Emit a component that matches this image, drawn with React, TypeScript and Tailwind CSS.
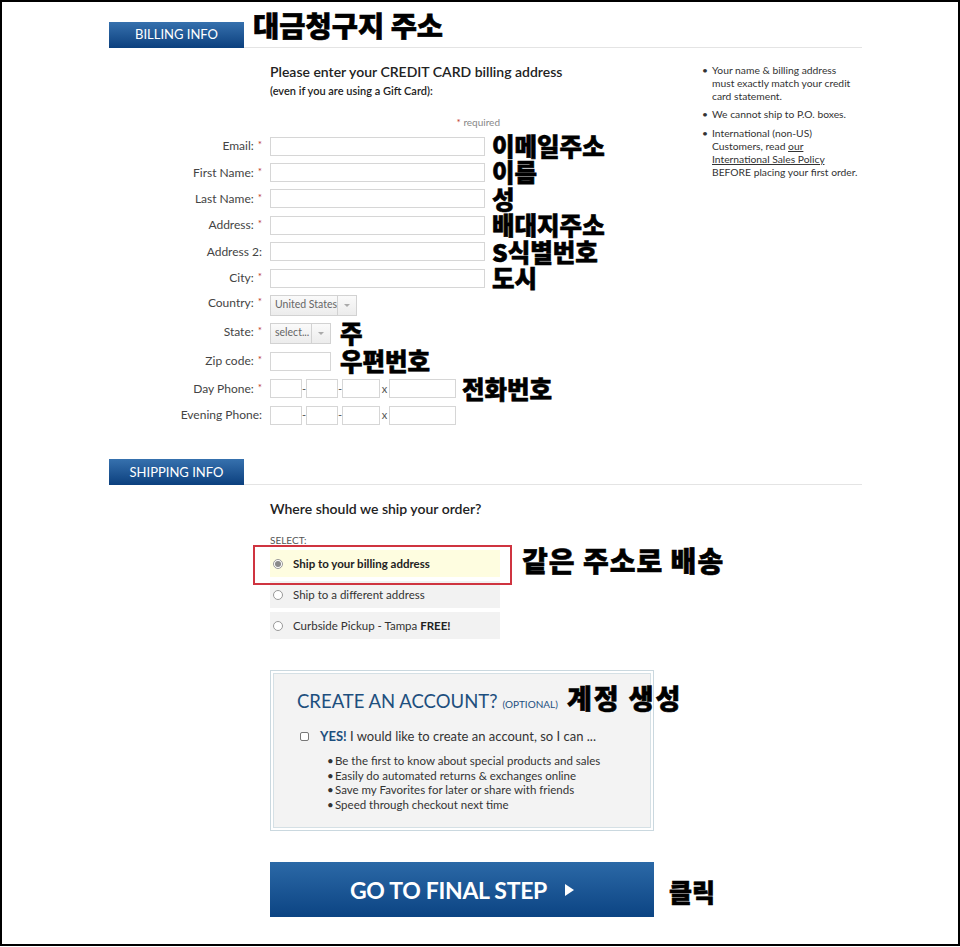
import React from "react";

const KR = "font-['Noto_Sans_CJK_KR',sans-serif] font-black text-black leading-none [-webkit-text-stroke:0.6px_#000]";

function Req() {
  return <span className="text-[#c0392b] text-[10px] ml-[4px] relative -top-[2px]">*</span>;
}

function Label({ text, req = true }: { text: string; req?: boolean }) {
  return (
    <div className="w-[154px] shrink-0 text-right text-[12px] text-[#444] pr-[1px]">
      {text}
      {req && <Req />}
    </div>
  );
}

function TextRow({ label, req = true, note }: { label: string; req?: boolean; note?: string }) {
  return (
    <div className="flex items-center h-[26.4px]">
      <Label text={label} req={req} />
      <div className="ml-[7px] w-[215px] h-[19px] border border-[#d6d6d6] bg-white shrink-0" />
      {note && <span className={`${KR} text-[24.5px] ml-[7px] whitespace-nowrap`}>{note}</span>}
    </div>
  );
}

function Select({ text, w, aw }: { text: string; w: string; aw: string }) {
  return (
    <div className={`${w} h-[21px] border border-[#d2d2d2] bg-gradient-to-b from-[#fafafa] to-[#ececec] flex shrink-0`}>
      <div className="flex-1 flex items-center pl-[4px] text-[10.5px] text-[#666] whitespace-nowrap overflow-hidden">{text}</div>
      <div className={`${aw} border-l border-[#d2d2d2] flex items-center justify-center`}>
        <div className="w-0 h-0 border-l-[3px] border-r-[3px] border-t-[3px] border-l-transparent border-r-transparent border-t-[#aaa]" />
      </div>
    </div>
  );
}

function Phone() {
  const box = "h-[19px] border border-[#d6d6d6] bg-white shrink-0";
  return (
    <div className="ml-[7px] flex items-center text-[11px] text-[#555]">
      <div className={`${box} w-[32px]`} />
      <span className="w-[4px] text-center">-</span>
      <div className={`${box} w-[32px]`} />
      <span className="w-[4px] text-center">-</span>
      <div className={`${box} w-[38px]`} />
      <span className="w-[9px] text-center">x</span>
      <div className={`${box} w-[67px]`} />
    </div>
  );
}

function SectionHeader({ title, note }: { title: string; note?: string }) {
  return (
    <div className="flex h-[26px]">
      <div className="w-[135px] h-[26px] bg-gradient-to-b from-[#3671ae] to-[#0b407e] text-white text-[13px] flex items-center justify-center">
        {title}
      </div>
      <div className="flex-1 border-b border-[#e4e4e4] relative">
        {note && (
          <span className={`${KR} absolute left-[9px] -top-[11px] text-[28.5px] whitespace-nowrap`}>{note}</span>
        )}
      </div>
    </div>
  );
}

function Bullet({ children }: { children: React.ReactNode }) {
  return (
    <div className="flex">
      <span className="w-[12px] shrink-0 pl-[2px]">•</span>
      <span>{children}</span>
    </div>
  );
}

function Radio({ checked }: { checked?: boolean }) {
  return (
    <span className="w-[10px] h-[10px] rounded-full border border-[#999] bg-white flex items-center justify-center shrink-0">
      {checked && <span className="w-[6px] h-[6px] rounded-full bg-[#8a8a8a]" />}
    </span>
  );
}

export default function App() {
  return (
    <div className="w-[960px] h-[946px] border-2 border-black bg-white font-['Lato',sans-serif] text-[#333] overflow-hidden">
      <div className="pl-[107px] pt-[20px] w-[860px]">
        <SectionHeader title="BILLING INFO" note="대금청구지 주소" />

        <div className="flex pt-[15px]">
          <div className="w-[591px] shrink-0">
            <div className="pl-[161px]">
              <div className="text-[14px] leading-[17px] font-semibold text-[#222]">
                Please enter your CREDIT CARD billing address
              </div>
              <div className="text-[11px] leading-[14px] font-semibold text-[#222] mt-[4px]">
                (even if you are using a Gift Card):
              </div>
            </div>
            <div className="w-[391px] text-right text-[10px] leading-[12px] text-[#888] mt-[18px]">
              <span className="text-[#c0392b]">*</span> required
            </div>
            <div className="mt-[5px]">
              <TextRow label="Email:" note="이메일주소" />
              <TextRow label="First Name:" note="이름" />
              <TextRow label="Last Name:" note="성" />
              <TextRow label="Address:" note="배대지주소" />
              <TextRow label="Address 2:" req={false} note="S식별번호" />
              <TextRow label="City:" note="도시" />
              <div className="flex items-center h-[28px]">
                <div className="-mt-[4px]"><Label text="Country:" /></div>
                <div className="ml-[7px]"><Select text="United States" w="w-[87px]" aw="w-[19px]" /></div>
              </div>
              <div className="flex items-center h-[28px]">
                <div className="-mt-[3px]"><Label text="State:" /></div>
                <div className="ml-[7px]"><Select text="select..." w="w-[61px]" aw="w-[19px]" /></div>
                <span className={`${KR} text-[24.5px] ml-[9px]`}>주</span>
              </div>
              <div className="flex items-center h-[28px]">
                <Label text="Zip code:" />
                <div className="ml-[7px] w-[61px] h-[19px] border border-[#d6d6d6] bg-white shrink-0" />
                <span className={`${KR} text-[24.5px] ml-[9px] whitespace-nowrap`}>우편번호</span>
              </div>
              <div className="flex items-center h-[27px]">
                <Label text="Day Phone:" />
                <Phone />
                <span className={`${KR} text-[24.5px] ml-[6px] whitespace-nowrap`}>전화번호</span>
              </div>
              <div className="flex items-center h-[26px]">
                <Label text="Evening Phone:" req={false} />
                <Phone />
              </div>
            </div>
          </div>

          <div className="w-[160px] shrink-0 pt-[1px] text-[10.3px] leading-[13px] text-[#333]">
            <div className="mb-[5px]">
              <Bullet>Your name &amp; billing address must exactly match your credit card statement.</Bullet>
            </div>
            <div className="mb-[6px]">
              <Bullet>We cannot ship to P.O. boxes.</Bullet>
            </div>
            <Bullet>
              International (non-US) Customers, read <span className="underline">our International Sales Policy</span> BEFORE placing your first order.
            </Bullet>
          </div>
        </div>

        <div className="mt-[31px]">
          <SectionHeader title="SHIPPING INFO" />
        </div>

        <div className="pl-[161px]">
          <div className="mt-[15px] text-[14px] leading-[17px] font-semibold text-[#222]">
            Where should we ship your order?
          </div>
          <div className="mt-[17px] text-[10px] leading-[12px] text-[#555]">SELECT:</div>
          <div className="mt-[4px] flex items-start">
            <div className="w-[230px] shrink-0 flex flex-col gap-[4px] relative text-[11.5px]">
              <div className="absolute -left-[17px] -top-[5px] w-[259px] h-[40px] border-2 border-[#cf3440] pointer-events-none" />
              <div className="h-[27px] bg-[#fefde0] flex items-center pl-[3px] gap-[10px] font-bold text-[#222]">
                <Radio checked />
                <span>Ship to your billing address</span>
              </div>
              <div className="h-[27px] bg-[#f2f2f2] flex items-center pl-[3px] gap-[10px] text-[#333]">
                <Radio />
                <span>Ship to a different address</span>
              </div>
              <div className="h-[27px] bg-[#f2f2f2] flex items-center pl-[3px] gap-[10px] text-[#333]">
                <Radio />
                <span>
                  Curbside Pickup - Tampa <b className="text-[#222]">FREE!</b>
                </span>
              </div>
            </div>
            <span className={`${KR} text-[28px] ml-[22px] mt-[-4px] whitespace-nowrap tracking-[1px]`}>같은 주소로 배송</span>
          </div>

          <div className="mt-[31px] w-[384px] h-[161px] border border-[#cad8df] p-[2px] bg-white">
            <div className="h-full border border-[#d5e0e5] bg-[#f3f3f3] pl-[23px] pt-[9px]">
              <div className="flex items-baseline leading-[24px] whitespace-nowrap">
                <span className="text-[18.5px] text-[#1d4f7e]">CREATE AN ACCOUNT?</span>
                <span className="text-[10px] text-[#1d4f7e] ml-[5px]">(OPTIONAL)</span>
                <span className={`${KR} text-[27px] ml-[9px] tracking-[2px] relative top-[1px]`}>계정 생성</span>
              </div>
              <div className="mt-[12px] flex items-center text-[13px] leading-[16px] text-[#333] whitespace-nowrap">
                <span className="ml-[3px] w-[9px] h-[9px] border border-[#777] rounded-[2px] bg-white shrink-0" />
                <span className="ml-[11px]">
                  <b className="text-[#1d4f7e]">YES!</b> I would like to create an account, so I can ...
                </span>
              </div>
              <div className="mt-[10px] ml-[30px] text-[11.5px] leading-[14.5px] text-[#333] whitespace-nowrap">
                <div className="flex"><span className="w-[8px]">•</span>Be the first to know about special products and sales</div>
                <div className="flex"><span className="w-[8px]">•</span>Easily do automated returns &amp; exchanges online</div>
                <div className="flex"><span className="w-[8px]">•</span>Save my Favorites for later or share with friends</div>
                <div className="flex"><span className="w-[8px]">•</span>Speed through checkout next time</div>
              </div>
            </div>
          </div>

          <div className="mt-[31px] flex items-center">
            <div className="w-[384px] h-[55px] shrink-0 bg-gradient-to-b from-[#2b69a7] to-[#0b4483] flex items-center justify-center text-white">
              <span className="text-[23px] font-bold tracking-[-0.3px]">GO TO FINAL STEP</span>
              <span className="ml-[18px] w-0 h-0 border-t-[6px] border-b-[6px] border-l-[9px] border-t-transparent border-b-transparent border-l-white" />
            </div>
            <span className={`${KR} text-[25px] ml-[15px] mt-[3px]`}>클릭</span>
          </div>
        </div>
      </div>
    </div>
  );
}
